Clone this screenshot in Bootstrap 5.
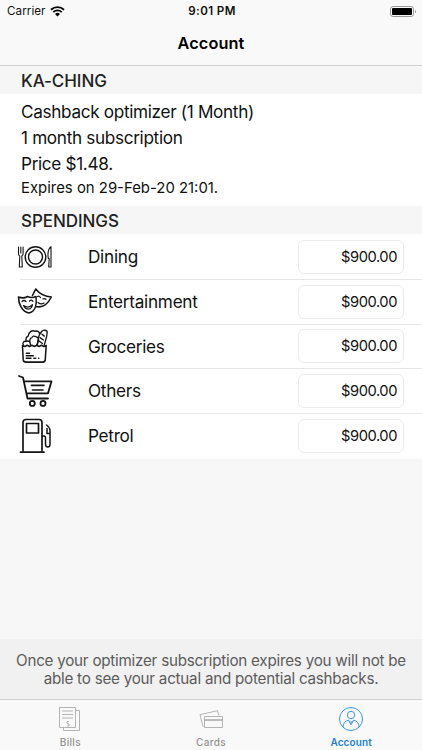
<!DOCTYPE html>
<html lang="en">
<head>
<meta charset="utf-8">
<meta name="viewport" content="width=device-width, initial-scale=1">
<title>Account</title>
<link href="https://cdn.jsdelivr.net/npm/bootstrap@5.3.0/dist/css/bootstrap.min.css" rel="stylesheet">
<style>
body{font-family:Inter,"Liberation Sans",sans-serif;background:#f7f7f7;color:#111;height:750px;overflow:hidden}
svg{display:block;flex:none}
.ink{fill:none;stroke:#151515;stroke-width:1.6;stroke-linecap:round;stroke-linejoin:round}
.status-bar{height:22px;font-size:11.6px;background:#f9f9f9;padding:1px 5px 0 7px;letter-spacing:.08px}
.status-bar>div{flex:1 1 0}
.clock{font-weight:600;letter-spacing:.38px}
.title-bar{height:44px;background:#f9f9f9;border-bottom:1px solid #d2d2d2;font-size:16.3px;font-weight:600;line-height:43px;color:#000;letter-spacing:.1px}
.section-head{height:28px;background:#f6f6f6;font-size:17px;font-weight:500;line-height:30px;padding-left:21px;color:#222;margin:0;letter-spacing:-.06px}
.plan{height:112px;background:#fff;padding:5px 0 0 21px;font-size:17.2px;line-height:26px;letter-spacing:-.34px}
.plan .expiry{font-size:14.9px;line-height:23px;letter-spacing:0}
.spend{height:225px;background:#fff}
.spend-row{height:44.8px;padding:1px 18px 0 17px;position:relative}
.spend-row+.spend-row::before{content:"";position:absolute;left:20px;right:0;top:0;height:1px;background:#e6e6e6}
.row-name{padding-left:35px;font-size:17.2px;letter-spacing:-.28px}
.amount{width:106px;height:34px;border:1px solid #ebebeb;border-radius:6px;padding:0 6px 0 0;font-size:14.7px;letter-spacing:-.45px;text-align:right;background:#fff;color:#111}
.notice{height:60px;background:#f1f1f1;color:#5c5c5c;font-size:15.2px;line-height:18px;padding-top:12.5px;letter-spacing:-.23px}
.tabs{height:51px;background:#f9f9f9;border-top:1px solid #cfcfcf;font-size:10px;font-weight:500;letter-spacing:.3px}
.tab-item{color:#929292;padding-top:6px;text-decoration:none}
.tab-item svg{fill:none;stroke:#b4b4b4;stroke-width:1}
.tab-item.active{color:#1b7fe0;font-weight:600;letter-spacing:.1px;padding-right:1px}
.tab-item.active svg{stroke:#3d93e8}
.tab-item span{line-height:12px;margin-top:4px}
</style>
</head>
<body class="d-flex flex-column">
<header>
  <div class="status-bar d-flex align-items-center">
    <div class="d-flex align-items-center gap-1"><span>Carrier</span>
      <svg width="15" height="11" viewBox="0 0 15 11"><g fill="none" stroke="#000" stroke-width="1.9"><path d="M1 3.7a9.4 9.4 0 0 1 13 0M3.3 6.1a6 6 0 0 1 8.4 0"/></g><path d="M7.5 10.4 5 7.9a3.6 3.6 0 0 1 5 0z"/></svg></div>
    <div class="clock text-center">9:01 PM</div>
    <div class="d-flex justify-content-end"><svg width="27" height="12" viewBox="0 0 27 12"><rect x=".5" y=".5" width="23" height="10" rx="2.5" fill="none" stroke="#999"/><rect x="2" y="2" width="20" height="7" rx="1"/><path d="M25 4c1.400.5 1.400 2.500 0 3z" fill="#999"/></svg></div>
  </div>
  <h1 class="title-bar text-center m-0">Account</h1>
</header>
<main class="flex-grow-1">
  <h2 class="section-head">KA-CHING</h2>
  <section class="plan">
    <div>Cashback optimizer (1 Month)</div>
    <div>1 month subscription</div>
    <div>Price $1.48.</div>
    <div class="expiry">Expires on 29-Feb-20 21:01.</div>
  </section>
  <h2 class="section-head">SPENDINGS</h2>
  <section class="spend">
    <div class="spend-row d-flex align-items-center">
      <svg class="ink" width="36" height="36" viewBox="0 0 36 36"><circle cx="18.5" cy="18" r="10.300" stroke-width="1.400"/><circle cx="18.500" cy="18" r="7" stroke-width="1.400"/><path stroke-width="1.100" d="M1.500 8v6.500q0 2 1.300 2.500l-.5 11h3l-.5-11q1.300-.5 1.300-2.500V8M3.800 8v6M34 7.800c-3 2-3.300 7-2.800 11.200l1 1-.5 8H34z"/></svg>
      <span class="row-name flex-grow-1">Dining</span><input class="amount" value="$900.00" aria-label="Dining">
    </div>
    <div class="spend-row d-flex align-items-center">
      <svg class="ink" width="36" height="36" viewBox="0 0 36 36"><path d="M1.500 13q5 2 9-.5 4.500 2 8.500 0C20 21 18 28 12 29 5 27.500 1.500 20 1.500 13zM15.500 11.500l3.200-6.500c4 5 8.800 7.500 15.600 8-3 6-7 11.500-15.300 9.500"/><path stroke-width="1.200" d="M5 17.500q2-2 4 0M12.500 17q2-2 3.500.3M6.500 21.500q5 3.500 9-.8-.8 4.200-4 4.500-3.500 0-5-3.700zM20.500 12.500q1.500-1 3 1M26 15q1.500-1 3 .3M21 18.500q3 2.500 6 .5"/></svg>
      <span class="row-name flex-grow-1">Entertainment</span><input class="amount" value="$900.00" aria-label="Entertainment">
    </div>
    <div class="spend-row d-flex align-items-center">
      <svg class="ink" width="36" height="36" viewBox="0 0 36 36"><g transform="translate(.7 .3) scale(.95 .98)"><path stroke-width="1.600" d="M5 17.500 5.800 32q.2 2.500 3 2.500h17.500q2.500 0 2.700-2.500L30 17.500l-2.500 1-2.500-1.200-2.500 1.200-2.500-1.200-2.500 1.200-2.500-1.200-2.500 1.200-2.500-1.200-2.500 1.200z"/><path stroke-width="1.400" d="M6 17c-1.500-2 .5-4.500 3-3.500 2-1.500 4.500 0 4.500 3.500M9 13c-1-3 1-4.500 2-5C11.500 4 15 1.500 18 3c3-1 5.500 1 5 3.500M13 15q-1-5 2-5.500 1-2.500 4-1 3 .5 3 3.500 0 3-2 4.500M20.800 17q.2-9 4.200-13.500c2-2.500 6.500-2 6 1.500-.5 5-2 8-3 12M25.500 6l2.500 2M23.500 9.500l3.500 2.500M22.500 13l3.500 2.500M9 25.500h3.500M9 28h7.500M9 30.500h5M17 30.500h2M22 30.500h.3"/></g></svg>
      <span class="row-name flex-grow-1">Groceries</span><input class="amount" value="$900.00" aria-label="Groceries">
    </div>
    <div class="spend-row d-flex align-items-center">
      <svg class="ink" width="36" height="36" viewBox="0 0 36 36"><path stroke-width="1.800" d="M2 3l4 1.500L10.500 25.500H31M7 8.300h27.500l-3.500 12H9.500"/><path d="M14.500 12.400H27M15.500 17H26"/><circle cx="15.300" cy="30.400" r="2.500" stroke-width="1.800"/><circle cx="26" cy="30.400" r="2.500" stroke-width="1.800"/></svg>
      <span class="row-name flex-grow-1">Others</span><input class="amount" value="$900.00" aria-label="Others">
    </div>
    <div class="spend-row d-flex align-items-center">
      <svg class="ink" width="36" height="36" viewBox="0 0 36 36"><path stroke-width="1.700" d="M6 32.500V4.500q0-3 3-3h13q3 0 3 3v28M9.500 5.500h12v9.500h-12zM3.500 34.200h23.500"/><path stroke-width="1.500" d="M25.500 18h1.500q1.500 0 1.500 2v6q0 3 2.300 3t2.200-3V12.500q0-3-3.500-5.500M30 10.500v5h3"/></svg>
      <span class="row-name flex-grow-1">Petrol</span><input class="amount" value="$900.00" aria-label="Petrol">
    </div>
  </section>
</main>
<div class="notice text-center">Once your optimizer subscription expires you will not be<br>able to see your actual and potential cashbacks.</div>
<nav class="tabs d-flex">
  <a class="tab-item d-flex flex-column align-items-center col-4"><svg width="24" height="26" viewBox="0 0 24 26"><path d="M1.500 1.500h16v20h-16zM17.500 4.500h4v20h-16v-3M4 5h11M4 8.500h11M4 12h11"/><path d="M11 15.500H9v2l2 .5v2H9"/></svg><span>Bills</span></a>
  <a class="tab-item d-flex flex-column align-items-center col-4"><svg width="26" height="26" viewBox="0 0 26 26"><path d="M5.500 20.500H5L2 8.700l17.500-4 1.400 4.800M6.500 10.500h18v11h-18z"/><path d="M6.500 14h18" stroke="#999" stroke-width="1.300"/></svg><span>Cards</span></a>
  <a class="tab-item active d-flex flex-column align-items-center col-4"><svg width="26" height="26" viewBox="0 0 26 26"><circle cx="13" cy="13" r="11.500"/><circle cx="13" cy="9" r="3.700"/><path d="M5.100 21c0-4 2-6.300 5.500-6.800l2.400 4.600 2.500-4.600c3.500.5 5.500 3 5.500 6.800M11.300 15.500l1.700.8 1.700-.8"/></svg><span>Account</span></a>
</nav>
<script src="https://cdn.jsdelivr.net/npm/bootstrap@5.3.0/dist/js/bootstrap.bundle.min.js"></script>
</body>
</html>
